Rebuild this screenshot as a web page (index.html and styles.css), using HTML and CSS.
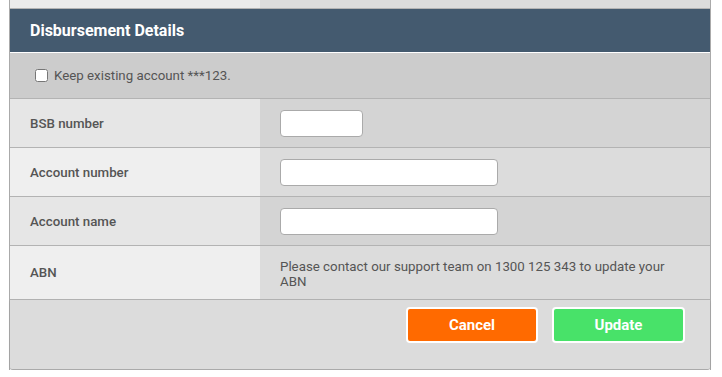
FILE: index.html
```html
<!DOCTYPE html>
<html lang="en">
<head>
    <meta charset="UTF-8">
    <meta name="viewport" content="width=device-width, initial-scale=1.0">
    <title>Disbursement Details</title>
    <link rel="stylesheet" href="styles.css">
</head>
<body>
    <div class="panel">
        <div class="row prev">
            <div class="label"></div>
            <div class="value"></div>
        </div>
        <h2 class="heading">Disbursement Details</h2>
        <div class="keep">
            <label><input type="checkbox" id="keepAccount"> Keep existing account ***123.</label>
        </div>
        <div class="row">
            <div class="label">BSB number</div>
            <div class="value"><input type="text" class="field short"></div>
        </div>
        <div class="row alt">
            <div class="label">Account number</div>
            <div class="value"><input type="text" class="field"></div>
        </div>
        <div class="row">
            <div class="label">Account name</div>
            <div class="value"><input type="text" class="field"></div>
        </div>
        <div class="row alt abn">
            <div class="label">ABN</div>
            <div class="value">Please contact our support team on 1300 125 343 to update your ABN</div>
        </div>
        <div class="actions">
            <button type="button" class="btn cancel">Cancel</button>
            <button type="submit" class="btn update">Update</button>
        </div>
    </div>
</body>
</html>
```

FILE: styles.css
```css
body {
    margin: 0;
    background-color: white;
    font-family: Roboto, "Liberation Sans", sans-serif;
    font-size: 13.3px;
    color: #555;
}
.panel {
    width: 700px;
    margin-left: 9px;
    border-left: 1px solid #aaa;
    border-right: 1px solid #aaa;
}
.row {
    display: grid;
    grid-template-columns: 250px 1fr;
    border-bottom: 1px solid #b3b3b3;
}
.row .label {
    display: flex;
    align-items: center;
    padding-left: 20px;
    background-color: #e6e6e6;
    font-weight: 500;
}
.row .value {
    display: flex;
    align-items: center;
    padding: 0 20px;
    background-color: #d4d4d4;
}
.row.alt .label {
    background-color: #efefef;
}
.row.alt .value {
    background-color: #dcdcdc;
}
.row.prev {
    height: 8px;
}
.row.prev .label {
    background-color: #ebebeb;
}
.row.prev .value {
    background-color: #dcdcdc;
}
.row:not(.prev) {
    height: 48px;
}
.row.abn {
    height: 53px;
}
.row.abn .value {
    line-height: 15px;
    padding-top: 2px;
}
.heading {
    margin: 0;
    height: 43px;
    line-height: 43px;
    padding-left: 20px;
    background-color: #445a6f;
    color: white;
    font-size: 16px;
    font-weight: bold;
    border-bottom: 1px solid white;
}
.keep {
    display: flex;
    align-items: center;
    height: 45px;
    padding-left: 24px;
    background-color: #cccccc;
    border-bottom: 1px solid #b3b3b3;
}
.keep label {
    display: flex;
    align-items: center;
}
.keep input {
    width: 13px;
    height: 13px;
    margin: 0 6px 0 1px;
}
.field {
    box-sizing: border-box;
    width: 218px;
    height: 27px;
    border: 1px solid #aaa;
    border-radius: 4px;
    background-color: white;
}
.field.short {
    width: 83px;
}
.actions {
    display: flex;
    justify-content: flex-end;
    align-items: flex-start;
    gap: 14px;
    height: 62px;
    padding: 7px 25px 0 0;
    background-color: #dcdcdc;
    border-bottom: 1px solid #aaa;
    border-radius: 0 0 3px 3px;
    box-shadow: 0 1px 2px rgba(0, 0, 0, 0.15);
}
.btn {
    width: 133px;
    height: 36px;
    border: 2px solid white;
    border-radius: 4px;
    color: white;
    font-family: Roboto, "Liberation Sans", sans-serif;
    font-size: 15px;
    font-weight: bold;
    cursor: pointer;
}
.cancel {
    width: 132px;
    background-color: #ff6a00;
}
.update {
    background-color: #48e269;
}
```
